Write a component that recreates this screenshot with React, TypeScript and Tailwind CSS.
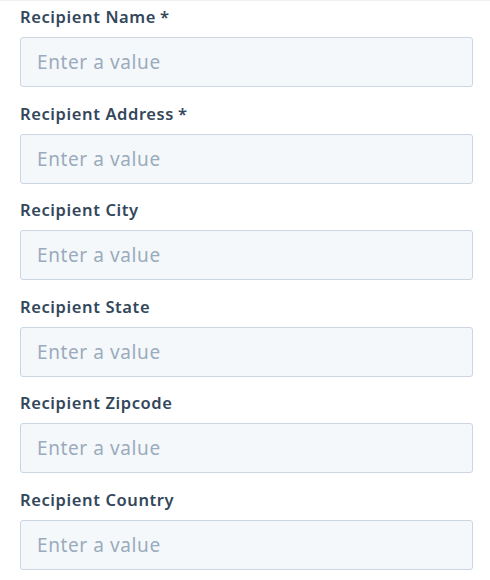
const fields = [
  { label: 'Recipient Name', required: true },
  { label: 'Recipient Address', required: true },
  { label: 'Recipient City', required: false },
  { label: 'Recipient State', required: false },
  { label: 'Recipient Zipcode', required: false },
  { label: 'Recipient Country', required: false },
]

export default function App() {
  return (
    <div
      className="w-[490px] h-[580px] bg-white border-t border-[#eef0f2] pl-5 pr-[17px] pt-[6px]"
      style={{ fontFamily: '"Noto Sans", "Open Sans", sans-serif' }}
    >
      {fields.map((f) => (
        <div key={f.label} className="mb-[16.6px]">
          <label className="block h-5 leading-5 text-[16.5px] font-semibold text-[#33475b] tracking-[0.6px]">
            {f.label}
            {f.required && <span className="ml-1">*</span>}
          </label>
          <input
            type="text"
            placeholder="Enter a value"
            className="mt-[10px] block w-full h-[50px] rounded-[3px] border border-[#cbd6e2] bg-[#f5f8fa] px-4 text-[19px] tracking-[0.6px] text-[#33475b] placeholder:text-[#9aabbd] outline-none"
          />
        </div>
      ))}
    </div>
  )
}
